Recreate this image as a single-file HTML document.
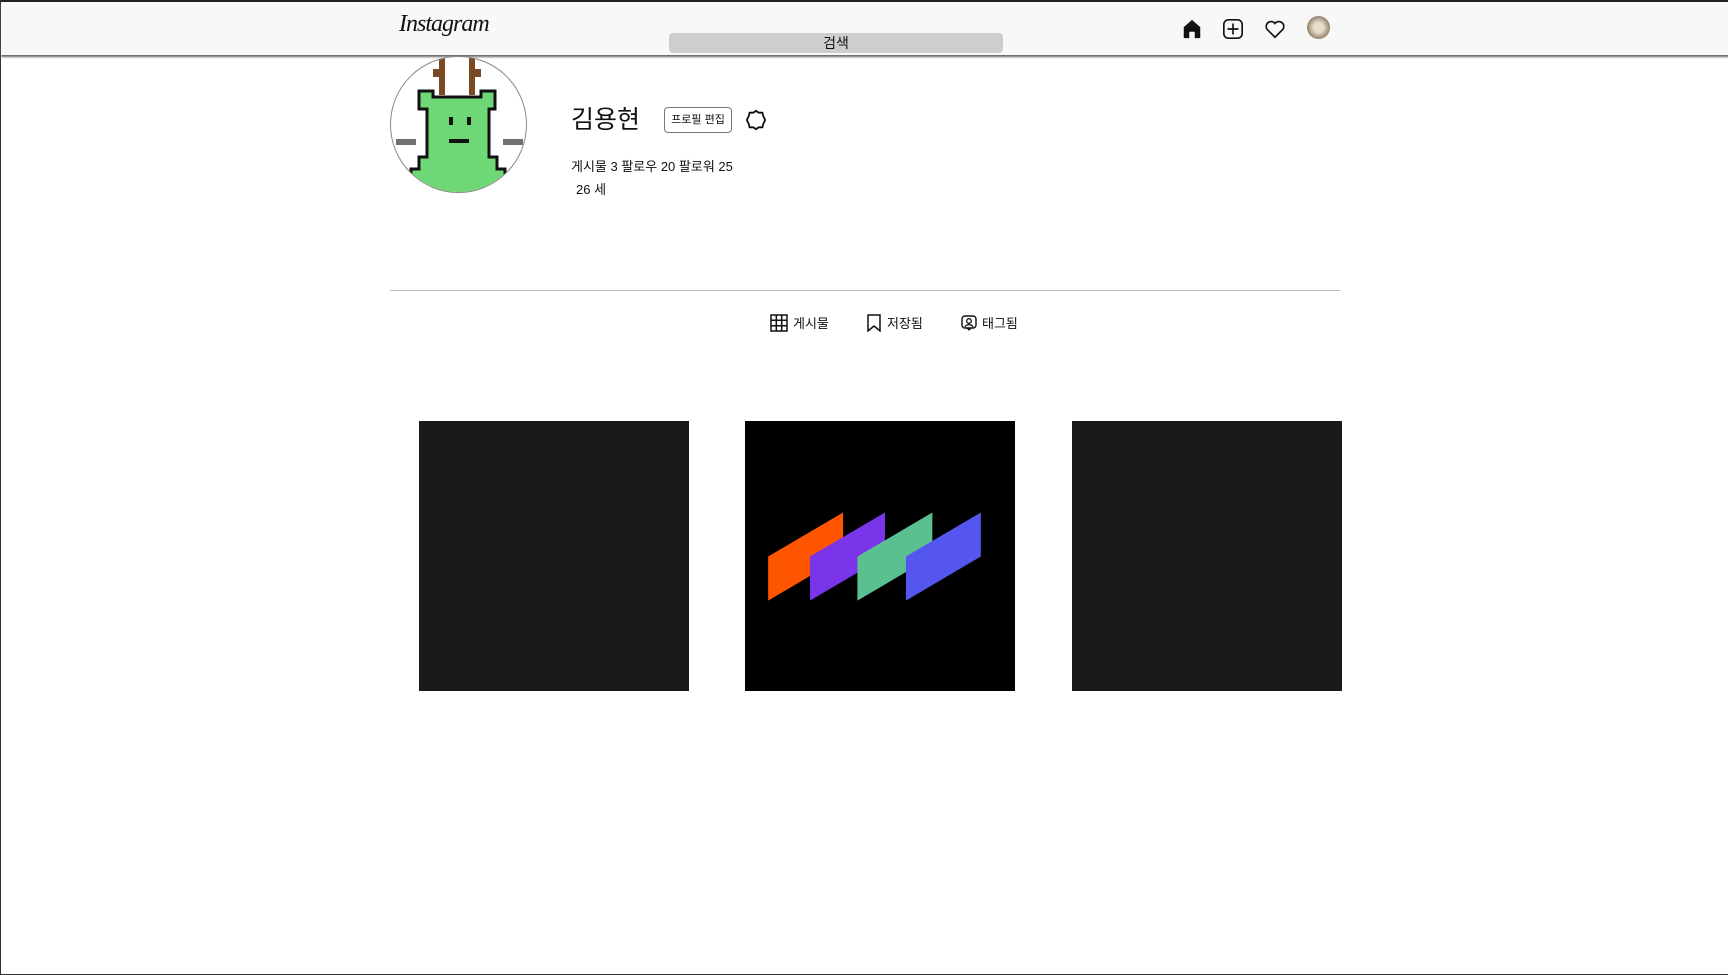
<!DOCTYPE html>
<html><head><meta charset="utf-8"><style>
*{margin:0;padding:0;box-sizing:border-box}
body{width:1728px;height:975px;background:#fff;position:relative;overflow:hidden;font-family:"Liberation Sans","Noto Sans CJK KR",sans-serif;color:#111;border-left:1px solid #333;border-bottom:1px solid #333}
.top{position:absolute;left:0;top:0;width:1728px;height:2px;background:#222}
.hdr{position:absolute;left:0;top:2px;width:1728px;height:53px;background:#f8f8f8;box-shadow:0 2px 2px #666}
.logo{position:absolute;left:398px;top:9px;font:italic 24px "Liberation Serif",serif;letter-spacing:-1px}
.search{position:absolute;left:668px;top:31px;width:334px;height:20px;background:#cecece;border-radius:4px;font-size:14px;text-align:center;line-height:20px}
.ic{position:absolute}
.av{position:absolute;left:389px;top:56px;width:137px;height:137px;border-radius:50%;border:1px solid #888;overflow:hidden;background:#fff}
.name{position:absolute;left:570px;top:100px;font-size:25px}
.btn{position:absolute;left:663px;top:107px;width:68px;height:26px;border:1px solid #777;border-radius:4px;font-size:11px;text-align:center;line-height:24px}
.stats{position:absolute;left:570px;top:156px;font-size:13px}
.age{position:absolute;left:575px;top:179px;font-size:13px}
.div{position:absolute;left:389px;top:290px;width:950px;height:1px;background:#bbb}
.tab{position:absolute;top:313px;font-size:13px;display:flex;align-items:center;gap:5px}
.post{position:absolute;top:421px;width:270px;height:270px;background:#181a19}
</style></head><body>
<div class="top"></div>
<div class="hdr">
<div class="logo">Instagram</div>
<div class="search">검색</div>
<svg class="ic" style="left:1180px;top:16px" width="22" height="22" viewBox="0 0 24 24"><path d="M3 10 12 2l9 8v12h-6v-7H9v7H3z" fill="#111"/></svg>
<svg class="ic" style="left:1221px;top:16px" width="22" height="22" viewBox="0 0 24 24"><rect x="2" y="2" width="20" height="20" rx="5" fill="none" stroke="#111" stroke-width="1.8"/><path d="M12 6v12M6 12h12" stroke="#111" stroke-width="1.8"/></svg>
<svg class="ic" style="left:1263px;top:16px" width="22" height="22" viewBox="0 0 24 24"><path d="M12 21 3.5 12.5A5 5 0 0 1 12 6a5 5 0 0 1 8.5 6.5z" fill="none" stroke="#111" stroke-width="1.8"/></svg>
<div class="ic" style="left:1306px;top:14px;width:23px;height:23px;border-radius:50%;background:radial-gradient(circle,#e8dccb 30%,#8a7560 75%)"></div>
</div>
<div class="av"><svg width="137" height="137" viewBox="0 0 137 137">
<rect x="48" y="0" width="6" height="38" fill="#7a4a25"/><rect x="78" y="0" width="6" height="38" fill="#7a4a25"/>
<rect x="42" y="12" width="6" height="8" fill="#7a4a25"/><rect x="84" y="12" width="6" height="8" fill="#7a4a25"/>
<path d="M28 34h14v6h48v-6h14v18h-6v48h8v12h8v25H20v-25h8v-12h8V52h-8z" fill="#6fd876" stroke="#111" stroke-width="3"/>
<rect x="58" y="60" width="4" height="8" fill="#111"/><rect x="76" y="60" width="4" height="8" fill="#111"/>
<rect x="58" y="82" width="20" height="4" fill="#111"/>
<rect x="5" y="82" width="20" height="6" fill="#111" opacity=".6"/><rect x="112" y="82" width="20" height="6" fill="#111" opacity=".6"/>
</svg></div>
<div class="name">김용현</div>
<div class="btn">프로필 편집</div>
<svg class="ic" style="left:744px;top:109px" width="22" height="22" viewBox="0 0 24 24"><path d="M12 2l3 2 4 0 1 4 2 4-2 4-1 4-4 0-3 2-3-2-4 0-1-4-2-4 2-4 1-4 4 0z" fill="none" stroke="#111" stroke-width="2"/></svg>
<div class="stats">게시물 3 팔로우 20 팔로워 25</div>
<div class="age">26 세</div>
<div class="div"></div>
<div class="tab" style="left:769px"><svg width="18" height="18" viewBox="0 0 18 18"><path d="M1 1h16v16H1zM6.3 1v16M11.7 1v16M1 6.3h16M1 11.7h16" fill="none" stroke="#111" stroke-width="1.5"/></svg>게시물</div>
<div class="tab" style="left:865px"><svg width="16" height="18" viewBox="0 0 16 18"><path d="M2 1h12v16l-6-5-6 5z" fill="none" stroke="#111" stroke-width="1.5"/></svg>저장됨</div>
<div class="tab" style="left:960px"><svg width="16" height="16" viewBox="0 0 16 16"><rect x="1" y="1" width="14" height="12" rx="3" fill="none" stroke="#111" stroke-width="1.4"/><circle cx="8" cy="6" r="2.3" fill="none" stroke="#111" stroke-width="1.3"/><path d="M4 12c1-3 7-3 8 0M6 13l2 2 2-2" fill="none" stroke="#111" stroke-width="1.3"/></svg>태그됨</div>
<div class="post" style="left:418px"></div>
<div class="post" style="left:744px;background:#000"><svg width="270" height="270" viewBox="0 0 245 245">
<path d="M21 123 89 83v40L21 163z" fill="#ff5500"/>
<path d="M59 123 127 83v40L59 163z" fill="#7a35ea"/>
<path d="M102 123 170 83v40L102 163z" fill="#5ac08f"/>
<path d="M146 123 214 83v40L146 163z" fill="#5555f0"/>
</svg></div>
<div class="post" style="left:1071px"></div>
</body></html>
